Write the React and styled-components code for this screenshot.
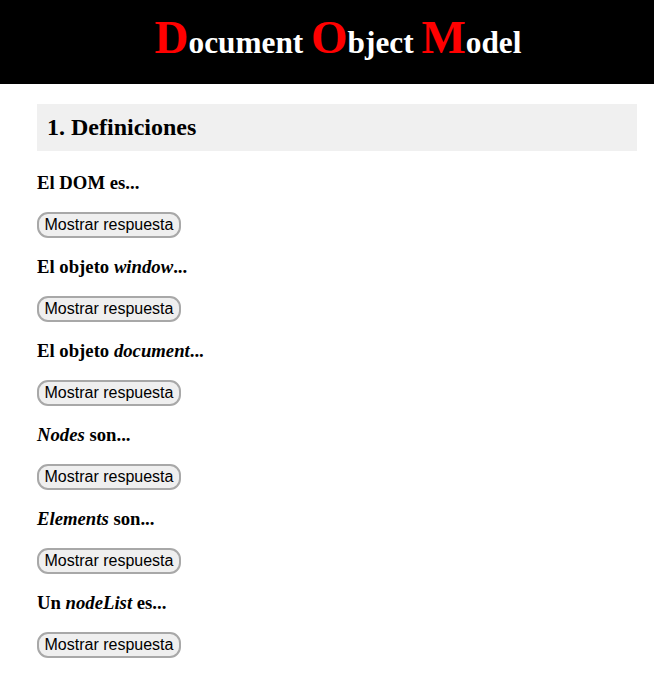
import React from "react";
import styled, { createGlobalStyle } from "styled-components";

const Global = createGlobalStyle`
  html, body { margin: 0; padding: 0; background: #fff; }
  body { font-family: "Liberation Serif", "Times New Roman", serif; color: #000; }
`;

const Header = styled.header`
  background: #000;
  height: 84px;
  box-sizing: border-box;
  padding: 14px 0 0 22px;
  text-align: center;
`;

const Title = styled.h1`
  margin: 0;
  font-size: 31.3px;
  line-height: 1;
  font-weight: bold;
  color: #fff;
`;

const Cap = styled.span`
  color: #ff0000;
  font-size: 1.5em;
`;

const Main = styled.main`
  padding: 20px 17px 0 37px;
`;

const SectionTitle = styled.h2`
  margin: 0 0 21px;
  background: #f0f0f0;
  height: 47px;
  box-sizing: border-box;
  padding: 0 10px;
  display: flex;
  align-items: center;
  font-size: 24px;
  font-weight: bold;
`;

const Question = styled.h3`
  margin: 18.3px 0;
  font-size: 18.72px;
  font-weight: bold;
  line-height: 21.5px;
`;

const Answer = styled.button`
  display: block;
  height: 26px;
  box-sizing: border-box;
  padding: 0 5.5px;
  border: 2px solid #a8a8a8;
  border-radius: 11px;
  background: #efefef;
  color: #000;
  font-family: "Liberation Sans", Arial, sans-serif;
  font-size: 16px;
  line-height: 1;
  cursor: pointer;
`;

const items = [
  [<>El DOM es...</>],
  [<>El objeto <i>window</i>...</>],
  [<>El objeto <i>document</i>...</>],
  [<><i>Nodes</i> son...</>],
  [<><i>Elements</i> son...</>],
  [<>Un <i>nodeList</i> es...</>],
];

export default function App() {
  return (
    <>
      <Global />
      <Header>
        <Title>
          <Cap>D</Cap>ocument <Cap>O</Cap>bject <Cap>M</Cap>odel
        </Title>
      </Header>
      <Main>
        <SectionTitle>1. Definiciones</SectionTitle>
        {items.map((q, i) => (
          <React.Fragment key={i}>
            <Question>{q}</Question>
            <Answer>Mostrar respuesta</Answer>
          </React.Fragment>
        ))}
      </Main>
    </>
  );
}
